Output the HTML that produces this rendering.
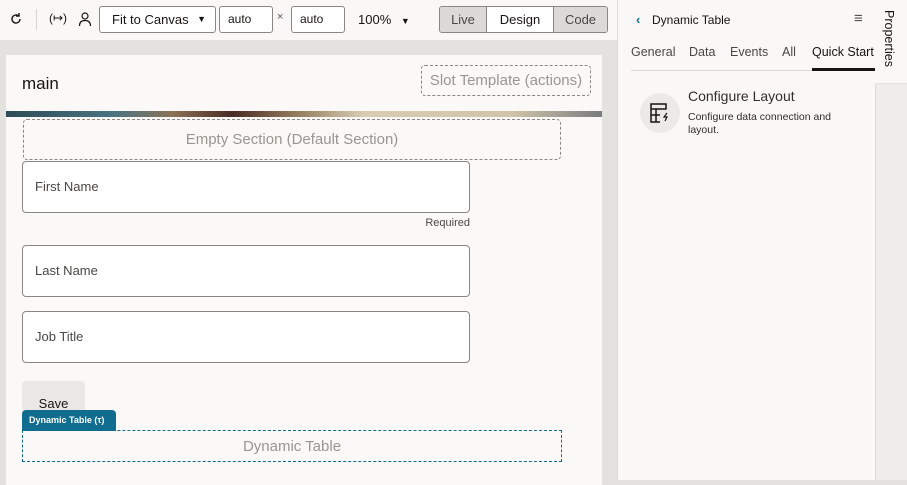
<!DOCTYPE html>
<html><head><style>
*{box-sizing:border-box;margin:0;padding:0}
body{width:907px;height:480px;overflow:hidden;background:#e4e2de;font-family:"Liberation Sans",sans-serif;position:relative;color:#161513}
.a{position:absolute}
.tb{left:0;top:0;width:617px;height:40px;background:#f9f8f6}
.inp{border:1px solid #8a8782;border-radius:3px;background:#fff;font-size:12px;height:27px;top:6px;padding:0 8px;line-height:25px}
.card{left:6px;top:55px;width:596px;height:430px;background:#faf9f8}
.field{left:22px;width:448px;height:52px;border:1px solid #8a8782;border-radius:4px;background:#fff;font-size:13px;color:#4a4743;padding-left:12px;line-height:50px}
.dash{border:1px dashed #8a8782;border-radius:4px;color:#99968f;text-align:center}
.panel{left:617px;top:0;width:290px;height:480px;background:#f9f8f6;border-left:1px solid #dcdad6}
</style></head><body>
<div class="a tb"></div>
<svg class="a" style="left:9px;top:12px" width="14" height="14" viewBox="0 0 14 14"><path d="M11 7a4 4 0 1 1-1.5-3.1M10 1v3H7" fill="none" stroke="#161513" stroke-width="1.4"/></svg>
<div class="a" style="left:36px;top:9px;width:1px;height:21px;background:#d6d3cf"></div>
<div class="a" style="left:49px;top:11px;font-size:12px">(↦)</div>
<svg class="a" style="left:78px;top:11px" width="14" height="16" viewBox="0 0 14 16"><circle cx="7" cy="5" r="3" fill="none" stroke="#161513" stroke-width="1.2"/><path d="M1.5 15c0-4 2.5-5.5 5.5-5.5s5.5 1.5 5.5 5.5" fill="none" stroke="#161513" stroke-width="1.2"/></svg>
<div class="a inp" style="left:99px;width:117px;font-size:13px;padding-left:12px">Fit to Canvas <span style="position:absolute;right:9px;font-size:9px">▼</span></div>
<div class="a inp" style="left:219px;width:54px">auto</div>
<div class="a" style="left:277px;top:11px;font-size:11px;color:#555">×</div>
<div class="a inp" style="left:291px;width:54px">auto</div>
<div class="a" style="left:358px;top:12px;font-size:13px">100% <span style="font-size:9px;margin-left:6px">▼</span></div>
<div class="a" style="left:439px;top:6px;width:169px;height:27px;border:1px solid #8a8782;border-radius:3px;overflow:hidden;display:flex;font-size:13px;line-height:25px;text-align:center">
<div style="width:47px;background:#dcdad6;border-right:1px solid #8a8782;color:#4a4743">Live</div>
<div style="width:67px;background:#fff;border-right:1px solid #8a8782">Design</div>
<div style="flex:1;background:#dcdad6;color:#4a4743">Code</div></div>

<div class="a card"></div>
<div class="a" style="left:22px;top:74px;font-size:17px">main</div>
<div class="a dash" style="left:421px;top:65px;width:170px;height:31px;font-size:15px;line-height:29px">Slot Template (actions)</div>
<div class="a" style="left:6px;top:111px;width:596px;height:6px;background:linear-gradient(90deg,#2e4c57 0,#4a7383 18%,#8b7355 28%,#4a2a24 38%,#8e7659 48%,#d8cdb0 60%,#cfc4a8 85%,#7a7c80 100%)"></div>
<div class="a dash" style="left:23px;top:119px;width:538px;height:41px;font-size:15px;line-height:40px">Empty Section (Default Section)</div>
<div class="a field" style="top:161px">First Name</div>
<div class="a" style="left:400px;top:217px;width:70px;text-align:right;font-size:11px;color:#4a4743">Required</div>
<div class="a field" style="top:245px">Last Name</div>
<div class="a field" style="top:311px">Job Title</div>
<div class="a" style="left:22px;top:381px;width:63px;height:44px;background:#e9e8e6;border-radius:4px;font-size:13px;text-align:center;line-height:46px">Save</div>
<div class="a" style="left:22px;top:410px;width:94px;height:21px;background:#116d8f;border-radius:4px 4px 0 0;color:#fff;font-size:9px;font-weight:bold;line-height:21px;padding-left:7px">Dynamic Table (τ)</div>
<div class="a dash" style="left:22px;top:430px;width:540px;height:32px;border-color:#116d8f;border-radius:0;font-size:15px;line-height:31px">Dynamic Table</div>
<div class="a" style="left:603px;top:40px;width:14px;height:440px;background:#e4e2de"></div>

<div class="a panel"></div>
<div class="a" style="left:636px;top:12px;font-size:13px;color:#116d8f;font-weight:bold">‹</div>
<div class="a" style="left:652px;top:13px;font-size:12px">Dynamic Table</div>
<div class="a" style="left:854px;top:10px;font-size:15px;color:#555">≡</div>
<div class="a" style="left:631px;top:45px;font-size:12.5px;color:#4a4743;word-spacing:0">General</div>
<div class="a" style="left:689px;top:45px;font-size:12.5px;color:#4a4743">Data</div>
<div class="a" style="left:730px;top:45px;font-size:12.5px;color:#4a4743">Events</div>
<div class="a" style="left:782px;top:45px;font-size:12.5px;color:#4a4743">All</div>
<div class="a" style="left:812px;top:45px;font-size:12.5px">Quick Start</div>
<div class="a" style="left:631px;top:70px;width:244px;height:1px;background:#dcdad6"></div>
<div class="a" style="left:812px;top:68px;width:63px;height:3px;background:#161513"></div>
<div class="a" style="left:875px;top:0;width:32px;height:83px;background:#f9f8f6"></div>
<div class="a" style="left:875px;top:83px;width:32px;height:397px;background:#efedea;border-left:1px solid #dcdad6;border-top:1px solid #e4e2de"></div>
<div class="a" style="left:882px;top:10px;font-size:12.5px;writing-mode:vertical-rl">Properties</div>
<div class="a" style="left:640px;top:93px;width:40px;height:40px;border-radius:50%;background:#eceae7"></div>
<svg class="a" style="left:650px;top:103px" width="22" height="20" viewBox="0 0 22 20"><path d="M1 1h15v5H1zM1 6v13h9M1 12h9M6 6v13M10 6h6" fill="none" stroke="#161513" stroke-width="1.5"/><path d="M17 10l-3 4h3l-2 4" fill="none" stroke="#161513" stroke-width="1.2"/></svg>
<div class="a" style="left:688px;top:88px;font-size:14px;color:#312d2a">Configure Layout</div>
<div class="a" style="left:688px;top:111px;font-size:10.5px;line-height:13px;color:#312d2a;width:170px">Configure data connection and layout.</div>
</body></html>
